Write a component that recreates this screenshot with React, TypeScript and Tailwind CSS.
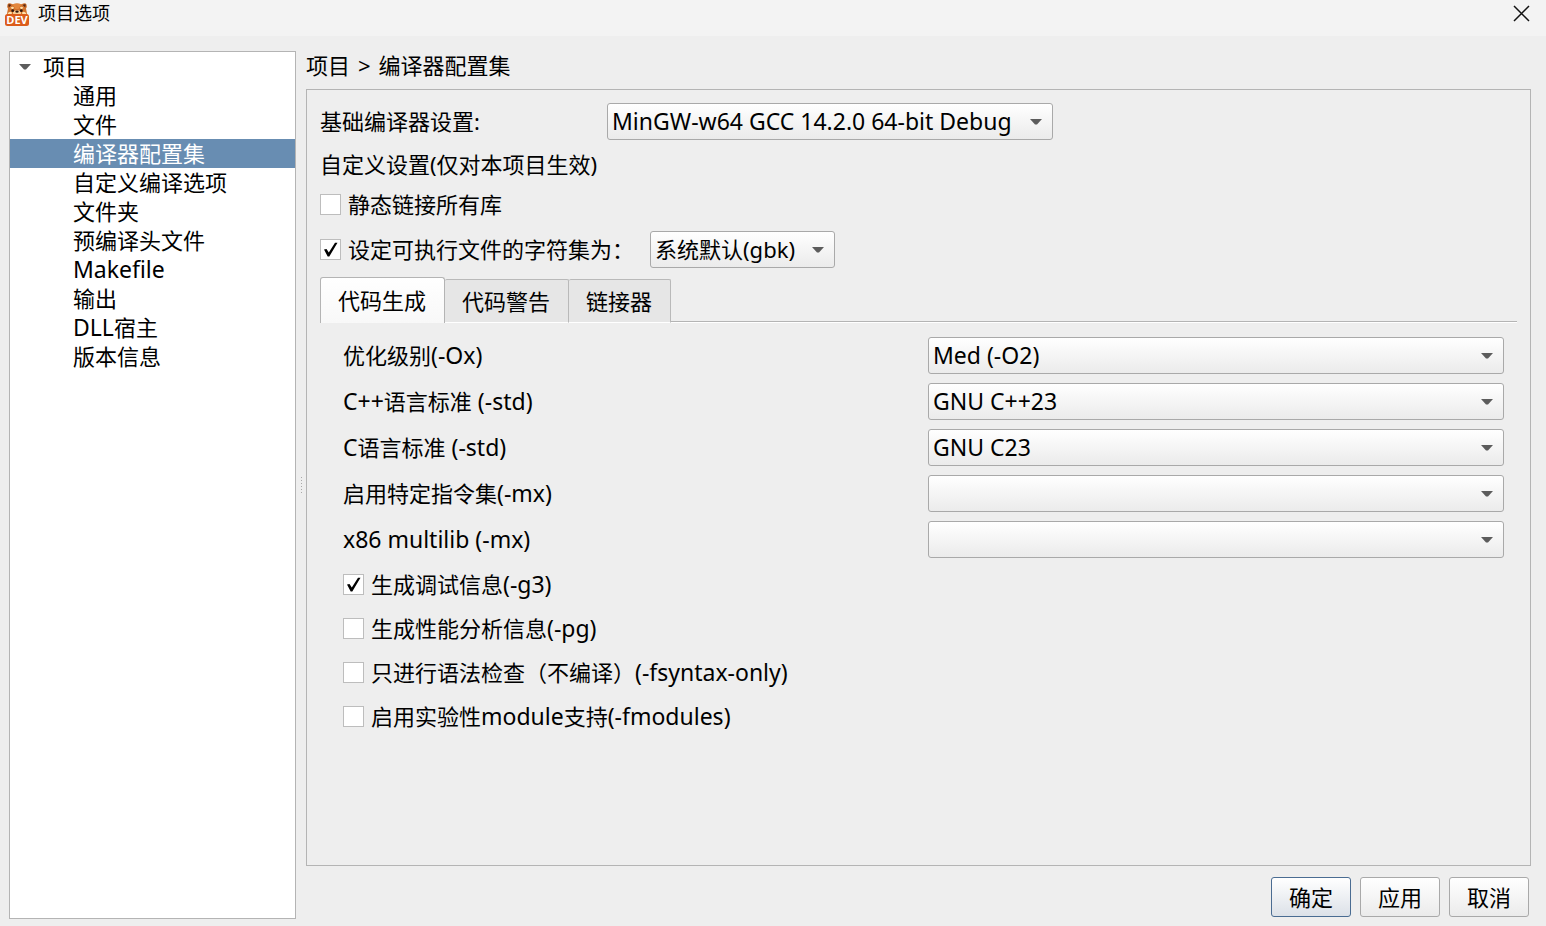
import { useState } from "react";

const treeItems = [
  "通用",
  "文件",
  "编译器配置集",
  "自定义编译选项",
  "文件夹",
  "预编译头文件",
  "Makefile",
  "输出",
  "DLL宿主",
  "版本信息",
];

const tabs = ["代码生成", "代码警告", "链接器"];

const compilerOptions = [
  { id: "opt", label: "优化级别(-Ox)", values: ["Med (-O2)"] },
  { id: "cppstd", label: "C++语言标准 (-std)", values: ["GNU C++23"] },
  { id: "cstd", label: "C语言标准 (-std)", values: ["GNU C23"] },
  { id: "isa", label: "启用特定指令集(-mx)", values: [""] },
  { id: "multilib", label: "x86 multilib (-mx)", values: [""] },
];

const compilerFlags = [
  { id: "g3", label: "生成调试信息(-g3)", checked: true },
  { id: "pg", label: "生成性能分析信息(-pg)", checked: false },
  { id: "syntax", label: "只进行语法检查（不编译）(-fsyntax-only)", checked: false },
  { id: "modules", label: "启用实验性module支持(-fmodules)", checked: false },
];

// Latin runs are set one pixel larger than the Chinese text around them.
function Mixed({ text }: { text: string }) {
  return (
    <span className="whitespace-pre">
      {text.split(/([\x20-\x7e]+)/).map((run, i) =>
        i % 2 === 1 ? (
          <span key={i} className="text-[23px]">
            {run}
          </span>
        ) : (
          run
        ),
      )}
    </span>
  );
}

function AppIcon() {
  return (
    <svg className="size-6" viewBox="0 0 24 24" aria-hidden="true">
      <path d="M2.500 2.500Q3.500 .3 7.500 2.200Q12 .8 16.500 2.200Q20.500 .3 21.500 2.500Q22.300 4.500 21 6.500L22.500 14H1.500L3 6.500Q1.700 4.500 2.500 2.500Z" fill="#d2722c" />
      <path d="M7.500 2.200Q12 .8 16.500 2.200L13.500 7H10.500Z" fill="#e3873d" />
      <path d="M3.200 2.600Q4.800 1.500 6.300 3L3.800 5.500Z M20.800 2.600Q19.200 1.500 17.700 3L20.200 5.500Z" fill="#5a2a16" />
      <path d="M5.500 6Q7.500 3.800 9 5.500L8 7.200Z M18.500 6Q16.500 3.800 15 5.500L16 7.200Z" fill="#ffe2ac" />
      <path d="M2.700 11.500Q4.500 8.500 7 10.500L6.500 13H2.700Z M21.300 11.500Q19.500 8.500 17 10.500L17.500 13H21.300Z" fill="#ffdfaa" />
      <ellipse cx="12" cy="11" rx="4" ry="2.800" fill="#f9cf96" />
      <circle cx="7.700" cy="8.700" r="1.400" fill="#33180e" />
      <circle cx="16.300" cy="8.700" r="1.400" fill="#33180e" />
      <ellipse cx="12" cy="9.600" rx="1.700" ry="1.200" fill="#33180e" />
      <rect x="0" y="12" width="24" height="12" rx="2.500" fill="#dc5c1b" />
      <text x="12" y="22" textAnchor="middle" fontSize="11" fontWeight="700" fill="#fff" fontFamily="Liberation Sans Narrow, Open Sans, sans-serif">
        DEV
      </text>
    </svg>
  );
}

function Arrow() {
  return (
    <svg className="h-[6px] w-[12px]" viewBox="0 0 12 6" aria-hidden="true">
      <path d="M0 0H12L7 5.500H5Z" fill="#5c5c5c" />
    </svg>
  );
}

function Select({ id, values }: { id: string; values: string[] }) {
  const latin = /^[\x20-\x7e]*$/.test(values[0]);
  return (
    <div className={latin ? "relative text-[23px]" : "relative"}>
      <select
        id={id}
        className="block h-[37px] w-full appearance-none rounded-[3px] border border-[#a9a9a9] bg-linear-to-b from-white to-[#ebebeb] pr-8 pl-1 text-black"
      >
        {values.map((v) => (
          <option key={v}>{v}</option>
        ))}
      </select>
      <span className="pointer-events-none absolute inset-y-0 right-[11px] flex items-center">
        <Arrow />
      </span>
    </div>
  );
}

function Check({ id, label, checked }: { id: string; label: string; checked: boolean }) {
  return (
    <div className="flex h-8 items-center gap-[7px]">
      <span className="relative block size-[21px]">
        <input
          id={id}
          type="checkbox"
          defaultChecked={checked}
          className="peer block size-[21px] appearance-none border border-[#bdbdbd] bg-white"
        />
        <svg
          className="pointer-events-none absolute inset-0 hidden size-[21px] peer-checked:block"
          viewBox="0 0 21 21"
          aria-hidden="true"
        >
          <path d="M4 10.500L6.500 10L8.800 13.500L15 3.800H17.500L9.300 17.500H7.700Z" fill="#000" />
        </svg>
      </span>
      <label htmlFor={id}>
        <Mixed text={label} />
      </label>
    </div>
  );
}

export default function App() {
  const [selected, setSelected] = useState("编译器配置集");
  const [tab, setTab] = useState("代码生成");

  return (
    <div className="flex min-h-screen flex-col bg-[#eeeeee] font-['Noto_Sans','Noto_Sans_CJK_SC',sans-serif] text-[22px] leading-[29px] text-black">
      <header className="flex h-9 items-center gap-[9px] bg-[#f3f3f3] pr-4 pb-[9px] pl-[5px]">
        <AppIcon />
        <h1 className="flex-1 text-[18px]">项目选项</h1>
        <button aria-label="关闭">
          <svg className="size-[17px]" viewBox="0 0 17 17" aria-hidden="true">
            <path d="M1 1L16 16M16 1L1 16" stroke="#111" strokeWidth="1.500" />
          </svg>
        </button>
      </header>

      <div className="flex flex-1 pt-[15px] pr-[15px] pb-[7px] pl-[9px]">
        <nav className="w-[287px] shrink-0 border border-[#b4b4b4] bg-white">
          <div className="flex h-[29px] items-center gap-3 pl-[9px]">
            <Arrow />
            <span>项目</span>
          </div>
          <ul>
            {treeItems.map((item) => (
              <li key={item}>
                <button
                  onClick={() => setSelected(item)}
                  className={
                    item === selected
                      ? "block h-[29px] w-full bg-[#688db2] pl-[63px] text-left text-white"
                      : "block h-[29px] w-full pl-[63px] text-left"
                  }
                >
                  <Mixed text={item} />
                </button>
              </li>
            ))}
          </ul>
        </nav>

        <div className="flex w-[10px] shrink-0 flex-col items-center justify-center gap-[2px]">
          {[0, 1, 2, 3, 4, 5].map((n) => (
            <span key={n} className="size-px bg-[#a8a8a8]" />
          ))}
        </div>

        <main className="flex flex-1 flex-col">
          <h2 className="flex h-[38px] gap-2">
            <span>项目</span>
            <span>&gt;</span>
            <span>{selected}</span>
          </h2>

          <section className="flex-1 border border-[#b4b4b4] p-[13px]">
            <div className="flex flex-col gap-2">
              <div className="flex items-center">
                <label htmlFor="base" className="w-[287px]">
                  基础编译器设置:
                </label>
                <div className="w-[446px]">
                  <Select id="base" values={["MinGW-w64 GCC 14.2.0 64-bit Debug"]} />
                </div>
              </div>
              <p className="flex h-8 items-center">自定义设置(仅对本项目生效)</p>
              <Check id="static" label="静态链接所有库" checked={false} />
              <div className="flex items-center pt-[3px]">
                <div className="w-[330px]">
                  <Check id="charset-on" label="设定可执行文件的字符集为：" checked={true} />
                </div>
                <div className="w-[185px]">
                  <Select id="charset" values={["系统默认(gbk)"]} />
                </div>
              </div>
            </div>

            <div role="tablist" className="mt-[9px] flex h-[46px] items-end">
              {tabs.map((t) => (
                <button
                  key={t}
                  role="tab"
                  aria-selected={t === tab}
                  onClick={() => setTab(t)}
                  className={
                    t === tab
                      ? "h-[46px] rounded-t-[3px] border border-b-0 border-[#b4b4b4] bg-linear-to-b from-white to-[#f8f8f8] pr-[18px] pl-[17px]"
                      : "h-[44px] rounded-t-[2px] border border-l-0 border-[#b9b9b9] border-b-white bg-[#e6e6e6] pr-[18px] pl-[17px]"
                  }
                >
                  {t}
                </button>
              ))}
              <div className="h-[2px] flex-1 border-t border-b border-t-[#b4b4b4] border-b-white" />
            </div>

            <div role="tabpanel" className="pt-[14px] pr-[13px] pl-[23px]">
              <div className="grid grid-cols-2 items-center gap-[9px]">
                {compilerOptions.map((o) => (
                  <div key={o.id} className="contents">
                    <label htmlFor={o.id}>
                      <Mixed text={o.label} />
                    </label>
                    <Select id={o.id} values={o.values} />
                  </div>
                ))}
              </div>
              <div className="mt-[10px] flex flex-col gap-3">
                {compilerFlags.map((f) => (
                  <Check key={f.id} id={f.id} label={f.label} checked={f.checked} />
                ))}
              </div>
            </div>
          </section>

          <footer className="flex justify-end gap-[9px] pt-[11px] pr-[2px] pb-[2px]">
            <button className="h-10 w-20 rounded-[3px] border border-[#4a6c92] bg-linear-to-b from-white to-[#dce1e8]">
              确定
            </button>
            <button className="h-10 w-20 rounded-[3px] border border-[#a9a9a9] bg-linear-to-b from-white to-[#ebebeb]">
              应用
            </button>
            <button className="h-10 w-20 rounded-[3px] border border-[#a9a9a9] bg-linear-to-b from-white to-[#ebebeb]">
              取消
            </button>
          </footer>
        </main>
      </div>
    </div>
  );
}
